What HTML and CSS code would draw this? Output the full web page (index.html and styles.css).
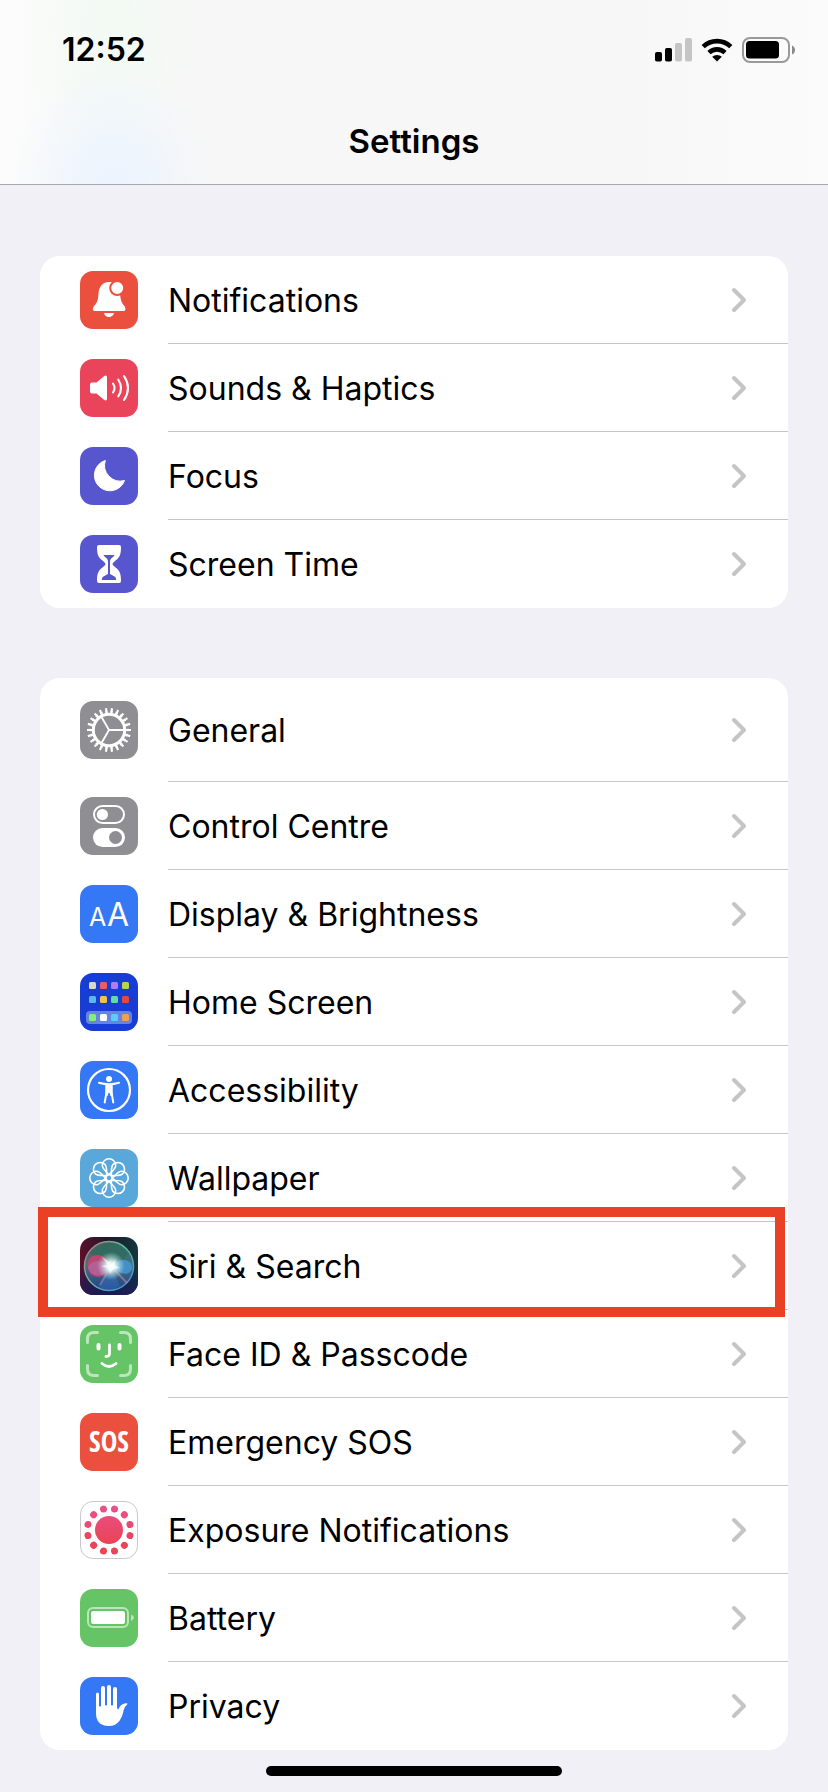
FILE: index.html
```
<!DOCTYPE html>
<html lang="en-GB">
<head>
<meta charset="utf-8">
<meta name="viewport" content="width=device-width, initial-scale=1">
<title>Settings</title>
<link rel="stylesheet" href="styles.css">
</head>
<body>
<svg class="defs" width="0" height="0" aria-hidden="true">
  <symbol id="chevron" viewBox="0 0 16 26">
    <path d="M3 3l10 10L3 23" fill="none" stroke="currentColor" stroke-width="4" stroke-linecap="round" stroke-linejoin="round"/>
  </symbol>
</svg>

<header class="top">
  <div class="status">
    <time class="clock">12:52</time>
    <div class="status-icons">
      <svg width="37" height="24" viewBox="0 0 37 24" role="img" aria-label="Signal">
        <rect x="0" y="14" width="7" height="9.500" rx="1.800"/>
        <rect x="10" y="10" width="7" height="13.500" rx="1.800"/>
        <rect x="20" y="5" width="7" height="18.500" rx="1.800" fill="#c5c5c5"/>
        <rect x="30" y="0" width="7" height="23.500" rx="1.800" fill="#c5c5c5"/>
      </svg>
      <svg width="32" height="24" viewBox="0 0 32 24" role="img" aria-label="Wi-Fi">
        <path d="M2.200 8.600a20 20 0 0 1 27.600 0M8 14.600a11.600 11.600 0 0 1 16 0" fill="none" stroke="#000" stroke-width="4.600"/>
        <path d="M11.200 18.800a7 7 0 0 1 9.600 0L16 23.600z"/>
      </svg>
      <svg width="53" height="26" viewBox="0 0 53 26" role="img" aria-label="Battery">
        <rect x="1" y="1" width="46" height="24" rx="7" fill="none" stroke="#999" stroke-width="2"/>
        <rect x="4" y="4" width="33" height="17.500" rx="3.500"/>
        <path d="M50 8.500q3 1.500 3 4.500t-3 4.500z" fill="#8a8a8a"/>
      </svg>
    </div>
  </div>
  <h1 class="title">Settings</h1>
</header>

<main class="content">
  <ul class="group">
    <li class="item"><a class="row" href="#notifications">
      <svg class="icon" viewBox="0 0 58 58"><rect width="58" height="58" rx="13" fill="#eb4f3d"/>
        <path fill="#fff" d="M29 11c-6 0-10 4.500-10.500 11-.4 7-1 9-4 12.500-2.500 3-2 5.500.5 5.500h28.500c2.300 0 2.800-2.500.5-5.500-2.500-3-3.500-5.500-4-12l-3-10.500c-2-1-5-1-8-1zM24 42h10c-.6 2.600-2.500 4-5 4s-4.400-1.400-5-4z"/>
        <circle cx="37.200" cy="17" r="7" fill="#fff" stroke="#eb4f3d" stroke-width="2"/></svg>
      <span class="label">Notifications</span><svg class="chevron"><use href="#chevron"/></svg></a></li>
    <li class="item"><a class="row" href="#sounds">
      <svg class="icon" viewBox="0 0 58 58"><rect width="58" height="58" rx="13" fill="#ea445a"/>
        <path fill="#fff" d="M12 23.500h4.500l7.500-6.300c1.700-1.300 3-.7 3 1.300v21c0 2-1.300 2.600-3 1.300l-7.500-6.300H12q-2 0-2-2v-7q0-2 2-2z"/>
        <path fill="none" stroke="#fff" stroke-width="2.100" stroke-linecap="round" d="M33 24.500q3 4.500 0 9M38.300 20.700q5.400 8.300 0 16.600M44 17q8 12 0 24"/></svg>
      <span class="label">Sounds &amp; Haptics</span><svg class="chevron"><use href="#chevron"/></svg></a></li>
    <li class="item"><a class="row" href="#focus">
      <svg class="icon" viewBox="0 0 58 58"><rect width="58" height="58" rx="13" fill="#5856cf"/>
        <path fill="#fff" stroke="#fff" stroke-linejoin="round" d="M25.300 13.500A15.500 15.500 0 1 0 44.500 33.500A15.800 15.800 0 0 1 25.300 13.500z"/></svg>
      <span class="label">Focus</span><svg class="chevron"><use href="#chevron"/></svg></a></li>
    <li class="item"><a class="row" href="#screen-time">
      <svg class="icon" viewBox="0 0 58 58"><rect width="58" height="58" rx="13" fill="#5856cf"/>
        <path fill="#fff" d="M19 10h20q2 0 2 2c0 8-1.500 10.500-5.500 13.500q-3 2.500-3 3.500t3 3.500C39.500 35.500 41 38 41 46q0 2-2 2H19q-2 0-2-2c0-8 1.500-10.500 5.500-13.500q3-2.500 3-3.500t-3-3.500C18.500 22.500 17 20 17 12q0-2 2-2z"/>
        <path fill="#5856cf" d="M24 20h10q.8 0 0 1l-3 2.800q-1 1-1 3V39l5 2.800q1.200.8 1.200 3.200H21.800q0-2.400 1.200-3.200l5-2.800V26.800q0-2-1-3L24 21q-.8-1 0-1z"/></svg>
      <span class="label">Screen Time</span><svg class="chevron"><use href="#chevron"/></svg></a></li>
  </ul>

  <ul class="group">
    <li class="item item-tall"><a class="row" href="#general">
      <svg class="icon" viewBox="0 0 58 58"><rect width="58" height="58" rx="13" fill="#8e8e93"/>
        <g fill="none" stroke="#fff">
          <circle cx="29" cy="29" r="15.700" stroke-width="3"/>
          <circle cx="29" cy="29" r="18" stroke-width="3" pathLength="220" stroke-dasharray="5 5" stroke-dashoffset="2.500"/>
          <circle cx="29" cy="29" r="20.500" stroke-width="3" pathLength="220" stroke-dasharray="3.600 6.400" stroke-dashoffset="1.800"/>
          <path stroke-width="1.900" d="M29 29h15M29 29l-7.500-13M29 29l-7.500 13"/>
        </g></svg>
      <span class="label">General</span><svg class="chevron"><use href="#chevron"/></svg></a></li>
    <li class="item"><a class="row" href="#control-centre">
      <svg class="icon" viewBox="0 0 58 58"><rect width="58" height="58" rx="13" fill="#8e8e93"/>
        <rect x="14" y="9" width="30" height="17" rx="8.500" fill="none" stroke="#fff" stroke-width="2"/>
        <circle cx="22.400" cy="17.500" r="5.600" fill="#fff"/>
        <rect x="13" y="31" width="32" height="19" rx="9.500" fill="#fff"/>
        <circle cx="35.500" cy="40.500" r="6.500" fill="#8e8e93"/></svg>
      <span class="label">Control Centre</span><svg class="chevron"><use href="#chevron"/></svg></a></li>
    <li class="item"><a class="row" href="#display">
      <svg class="icon" viewBox="0 0 58 58"><rect width="58" height="58" rx="13" fill="#3478f6"/>
        <text class="glyph-aa" x="9" y="41" font-size="25">A</text><text class="glyph-aa" x="27" y="41" font-size="32">A</text></svg>
      <span class="label">Display &amp; Brightness</span><svg class="chevron"><use href="#chevron"/></svg></a></li>
    <li class="item"><a class="row" href="#home-screen">
      <svg class="icon" viewBox="0 0 58 58"><rect width="58" height="58" rx="13" fill="#173dd4"/>
        <rect x="6" y="38" width="46" height="13" rx="4" fill="#6584e3"/>
        <g>
          <rect x="9" y="9" width="7" height="7" rx="1.500" fill="#d9d7d0"/><rect x="20" y="9" width="7" height="7" rx="1.500" fill="#ee5b63"/><rect x="31" y="9" width="7" height="7" rx="1.500" fill="#b07af5"/><rect x="42" y="9" width="7" height="7" rx="1.500" fill="#b9d350"/>
          <rect x="9" y="23" width="7" height="7" rx="1.500" fill="#5ab9f5"/><rect x="20" y="23" width="7" height="7" rx="1.500" fill="#f7c142"/><rect x="31" y="23" width="7" height="7" rx="1.500" fill="#6cd6ab"/><rect x="42" y="23" width="7" height="7" rx="1.500" fill="#e9463a"/>
          <rect x="9" y="41" width="7" height="7" rx="1.500" fill="#83ef7f"/><rect x="20" y="41" width="7" height="7" rx="1.500" fill="#fff"/><rect x="31" y="41" width="7" height="7" rx="1.500" fill="#5fcbfa"/><rect x="42" y="41" width="7" height="7" rx="1.500" fill="#f0a056"/>
        </g></svg>
      <span class="label">Home Screen</span><svg class="chevron"><use href="#chevron"/></svg></a></li>
    <li class="item"><a class="row" href="#accessibility">
      <svg class="icon" viewBox="0 0 58 58"><rect width="58" height="58" rx="13" fill="#3478f6"/>
        <circle cx="29" cy="29" r="21" fill="none" stroke="#fff" stroke-width="2.200"/>
        <circle cx="29" cy="18" r="3" fill="#fff"/>
        <path fill="none" stroke="#fff" stroke-width="2" stroke-linecap="round" stroke-linejoin="round" d="M19 21.700q5 1.500 10 1.500t10-1.500M26.500 24v7.500l-1.800 10M31.500 24v7.500l1.800 10"/>
        <path fill="#fff" d="M25.500 23h7v8.500l.5 3.500h-2.500l-1-3h-1l-1 3H25l.5-3.500z"/></svg>
      <span class="label">Accessibility</span><svg class="chevron"><use href="#chevron"/></svg></a></li>
    <li class="item"><a class="row" href="#wallpaper">
      <svg class="icon" viewBox="0 0 58 58"><rect width="58" height="58" rx="13" fill="#59a8d9"/>
        <g fill="none" stroke="#fff" stroke-width="1.600">
          <path id="petal" d="M29 25.800C26.500 22.500 22.300 20 22.300 16.500a6.700 6.700 0 0 1 13.400 0c0 3.500-4.200 6-6.700 9.300z"/>
          <use href="#petal" transform="rotate(45 29 29)"/><use href="#petal" transform="rotate(90 29 29)"/><use href="#petal" transform="rotate(135 29 29)"/><use href="#petal" transform="rotate(180 29 29)"/><use href="#petal" transform="rotate(225 29 29)"/><use href="#petal" transform="rotate(270 29 29)"/><use href="#petal" transform="rotate(315 29 29)"/>
          <circle cx="29" cy="29" r="3.200"/>
        </g></svg>
      <span class="label">Wallpaper</span><svg class="chevron"><use href="#chevron"/></svg></a></li>
    <li class="item item-marked"><a class="row" href="#siri">
      <svg class="icon" viewBox="0 0 58 58">
        <defs>
          <linearGradient id="siri-bg" x1="0" y1="0" x2="1" y2="0"><stop offset="0" stop-color="#5c1029"/><stop offset=".45" stop-color="#1d1a2c"/><stop offset="1" stop-color="#12383a"/></linearGradient>
          <linearGradient id="siri-low" x1="0" y1="0" x2="0" y2="1"><stop offset=".4" stop-color="#1c1a60" stop-opacity="0"/><stop offset="1" stop-color="#191b5c" stop-opacity=".85"/></linearGradient>
          <linearGradient id="siri-ring" x1="0" y1="0" x2="1" y2="1"><stop offset="0" stop-color="#d0607c"/><stop offset=".45" stop-color="#5cc09a"/><stop offset="1" stop-color="#3f86d8"/></linearGradient>
          <linearGradient id="siri-orb" x1="0" y1="0" x2="0" y2="1"><stop offset="0" stop-color="#3c8271" stop-opacity=".75"/><stop offset=".5" stop-color="#568c98" stop-opacity=".7"/><stop offset="1" stop-color="#234c9c" stop-opacity=".75"/></linearGradient>
          <radialGradient id="siri-glow"><stop offset="0" stop-color="#fff"/><stop offset=".3" stop-color="#f2fffc" stop-opacity=".9"/><stop offset="1" stop-color="#a9e8e0" stop-opacity="0"/></radialGradient>
        </defs>
        <rect width="58" height="58" rx="13" fill="url(#siri-bg)"/><rect width="58" height="58" rx="13" fill="url(#siri-low)"/>
        <circle cx="29" cy="29" r="24.500" fill="url(#siri-orb)" stroke="url(#siri-ring)" stroke-width="1.500"/>
        <path d="M10 16q19-19 38 0-6 10-17 12Q20 20 10 16z" fill="#2d6a59" opacity=".6"/>
        <path d="M31 29C27 20 20 16 13 19c-8 3-7 17 1 20 7 3 14-2 17-10z" fill="#d83e70" opacity=".8"/>
        <path d="M31 29C25 22 10 22 8 31c3 10 18 10 23-2z" fill="#a87fc4" opacity=".45"/>
        <path d="M31 29c7-8 20-8 21 1 0 9-12 9-21-1z" fill="#4398dc" opacity=".8"/>
        <path d="M31 29L20 48M31 29l16 17" stroke="#d09ab9" stroke-width="2" opacity=".45"/>
        <path d="M31 29L18 51q13 5 22-2z" fill="#3982d8" opacity=".35"/>
        <circle cx="31" cy="29" r="14" fill="url(#siri-glow)"/>
        <path d="M22 20l10 7 4-5-2 6 6 3-7 1-3 5-2-6-7-2 7-1z" fill="#fff" opacity=".6"/></svg>
      <span class="label">Siri &amp; Search</span><svg class="chevron"><use href="#chevron"/></svg></a></li>
    <li class="item"><a class="row" href="#face-id">
      <svg class="icon" viewBox="0 0 58 58"><rect width="58" height="58" rx="13" fill="#65c466"/>
        <g fill="none" stroke="#fff" stroke-width="3" stroke-linecap="round">
          <path stroke="#bce5bc" d="M7.500 17.500V14q0-6.500 6.500-6.500h3.500M40.500 7.500H44q6.500 0 6.500 6.500v3.500M50.500 40.500V44q0 6.500-6.500 6.500h-3.500M17.500 50.500H14q-6.500 0-6.500-6.500v-3.500"/>
          <path stroke-width="4" d="M18.500 20v3.500M39.500 20v3.500"/>
          <path stroke-width="2.800" d="M29.500 20v8.500q0 3-3.500 3M22 38.500q7 6 14 0"/>
        </g></svg>
      <span class="label">Face ID &amp; Passcode</span><svg class="chevron"><use href="#chevron"/></svg></a></li>
    <li class="item"><a class="row" href="#sos">
      <svg class="icon" viewBox="0 0 58 58"><rect width="58" height="58" rx="13" fill="#eb4f3d"/>
        <text class="glyph-sos" x="29" y="39">SOS</text></svg>
      <span class="label">Emergency SOS</span><svg class="chevron"><use href="#chevron"/></svg></a></li>
    <li class="item"><a class="row" href="#exposure">
      <svg class="icon" viewBox="0 0 58 58">
        <defs><linearGradient id="exposure" x1="0" y1="0" x2="0" y2="58" gradientUnits="userSpaceOnUse"><stop offset=".1" stop-color="#e9518a"/><stop offset=".7" stop-color="#ea4459"/></linearGradient></defs>
        <rect x=".5" y=".5" width="57" height="57" rx="12.500" fill="#fff" stroke="#c9c9cc"/>
        <circle cx="29" cy="29" r="14" fill="url(#exposure)"/>
        <circle cx="29" cy="29" r="21.700" fill="none" stroke="url(#exposure)" stroke-width="7" stroke-linecap="round" pathLength="120" stroke-dasharray="0.010 9.990" stroke-dashoffset="5"/></svg>
      <span class="label">Exposure Notifications</span><svg class="chevron"><use href="#chevron"/></svg></a></li>
    <li class="item"><a class="row" href="#battery">
      <svg class="icon" viewBox="0 0 58 58"><rect width="58" height="58" rx="13" fill="#65c466"/>
        <rect x="8" y="19" width="40" height="19" rx="5" fill="none" stroke="#bce5bc" stroke-width="2"/>
        <rect x="11" y="22" width="34" height="13" rx="2.500" fill="#fff"/>
        <path d="M51 25.500q3 1.500 3 3t-3 3.500z" fill="#bce5bc"/></svg>
      <span class="label">Battery</span><svg class="chevron"><use href="#chevron"/></svg></a></li>
    <li class="item"><a class="row" href="#privacy">
      <svg class="icon" viewBox="0 0 58 58"><rect width="58" height="58" rx="13" fill="#3478f6"/>
        <path fill="#fff" d="M16 17.500q0-2 1.500-2t1.500 2V29q1 1 2 0V11q0-2 2-2t2 2v17q1 1 2 0V10q0-2 2-2t2 2v18q1 1 2 0V12q0-2 2-2t2 2v18q.2 3 1.500 2 1.500-3.500 4-4.800 2.500-1.200 4.500-1 1 .6-.3 1.800-2 1.500-3 5C42 41 39 49 28.500 49 20 49 16 44 16 36z"/></svg>
      <span class="label">Privacy</span><svg class="chevron"><use href="#chevron"/></svg></a></li>
  </ul>
</main>
<footer class="home-indicator"></footer>
</body>
</html>
```
FILE: styles.css
```
* {
  box-sizing: border-box;
}

body {
  margin: 0;
  background: #f1f0f6;
  color: #000;
  font-family: Inter, "Liberation Sans", sans-serif;
}

.defs {
  position: absolute;
}

.top {
  border-bottom: 1px solid #a9a9ac;
  background:
    radial-gradient(ellipse 100px 120px at 112px 185px, #eaf3ff 0%, #eaf3ff00 100%),
    radial-gradient(ellipse 90px 150px at 112px 24px, #f1faf2 0%, #f1faf200 100%),
    linear-gradient(90deg, #fbfcfb 0, #f7f7f7 200px, #f7f7f7 75%, #fbfbfb 100%);
}

.status {
  display: flex;
  align-items: center;
  justify-content: space-between;
  height: 99px;
  padding: 0 33px 0 62px;
}

.clock {
  padding-top: 1px;
  font-size: 32px;
  font-weight: 600;
  line-height: 40px;
}

.status-icons {
  display: flex;
  align-items: center;
  gap: 9px;
}

.title {
  height: 85px;
  margin: 0;
  font-size: 33px;
  font-weight: 600;
  line-height: 84px;
  text-align: center;
}

.content {
  display: flex;
  flex-direction: column;
  gap: 70px;
  padding: 71px 40px 0;
}

.group {
  margin: 0;
  padding: 0;
  border-radius: 20px;
  background: #fff;
  list-style: none;
}

.item {
  position: relative;
  height: 88px;
}

.item-tall {
  height: 104px;
}

.row {
  display: flex;
  align-items: center;
  height: 100%;
  padding-left: 40px;
  color: inherit;
  text-decoration: none;
}

.icon {
  flex: none;
  width: 58px;
  height: 58px;
  margin-right: 30px;
}

.label {
  display: flex;
  flex: 1;
  align-items: center;
  height: 100%;
  padding-top: 2px;
  border-bottom: 1px solid #c6c6c8;
  font-size: 32px;
  line-height: 40px;
}

.chevron {
  align-self: stretch;
  flex: none;
  width: 57px;
  height: 100%;
  padding: 1px 41px 0 0;
  border-bottom: 1px solid #c6c6c8;
  color: #c5c5c7;
}

.item:last-child .label,
.item:last-child .chevron {
  border-bottom-color: transparent;
}

.item-marked::after {
  position: absolute;
  inset: -15px 3px -7px -2px;
  border: 10px solid #ea4025;
  content: "";
  pointer-events: none;
}

.glyph-aa {
  fill: #fff;
  font-family: Inter, sans-serif;
}

.glyph-sos {
  fill: #fff;
  font-family: "Liberation Sans Narrow", "Open Sans Condensed", "Roboto Condensed", Roboto, sans-serif;
  font-size: 28px;
  font-weight: 700;
  text-anchor: middle;
}

.home-indicator {
  width: 296px;
  height: 10px;
  margin: 16px auto 0;
  border-radius: 5px;
  background: #000;
}
```
